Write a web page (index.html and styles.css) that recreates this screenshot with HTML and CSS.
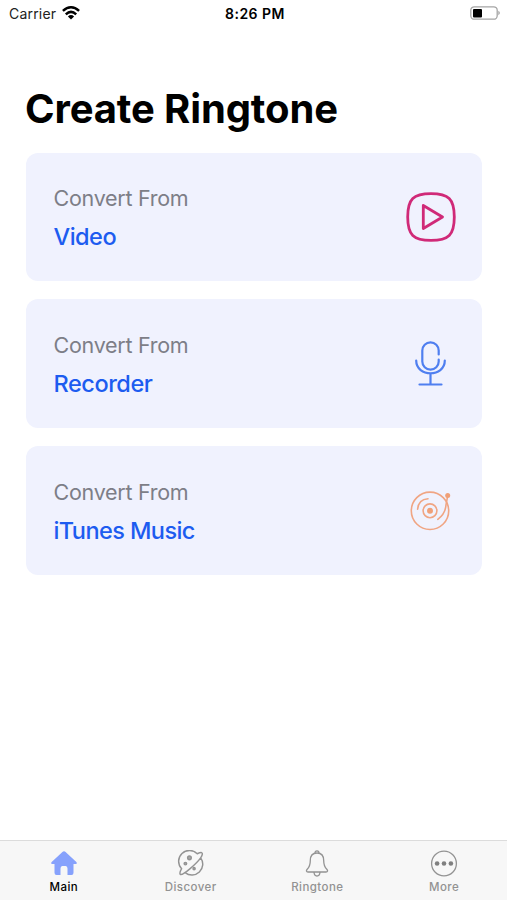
FILE: index.html
```html
<!DOCTYPE html>
<html lang="en">
<head>
<meta charset="utf-8">
<title>Create Ringtone</title>
<link rel="stylesheet" href="styles.css">
</head>
<body>
<div class="app">
  <header class="status">
    <div class="carrier"><span class="carrier-name">Carrier</span>
      <svg class="wifi" width="18" height="14" viewBox="0 0 18 14" fill="none" stroke="#000" stroke-width="2.5"><path d="M.9 4.9Q9-2.3 17.1 4.9M3.8 8.300Q9 3.500 14.2 8.300"/><path d="M9 13.6 5.9 10.4Q9 7.8 12.1 10.4Z" fill="#000" stroke="none"/></svg>
    </div>
    <span class="clock">8:26 PM</span>
    <svg class="battery" width="31" height="14" viewBox="0 0 31 14"><rect x=".8" y=".8" width="26.4" height="12.4" rx="3.5" fill="none" stroke="#a5a5a5" stroke-width="1.3"/><rect x="3" y="3" width="9" height="8.500" rx="1" fill="#000"/><path d="M28.3 4.800Q31.500 7 28.3 9.200Z" fill="#a5a5a5"/></svg>
  </header>
  <main class="content">
    <h1 class="title">Create Ringtone</h1>
    <section class="cards">
      <article class="card">
        <div class="text"><p class="from">Convert From</p><p class="source source-video">Video</p></div>
        <svg class="icon" width="52" height="52" viewBox="0 0 52 52" fill="none" stroke="#d02a78" stroke-width="2.8" stroke-linejoin="round"><path d="M26 2.7C43.5 2.7 49.3 8 49.3 26S43.5 49.3 26 49.3 2.7 44 2.7 26 8.500 2.700 26 2.700Z"/><path d="M18.300 14.500 37.500 26 18.300 37.500Z"/></svg>
      </article>
      <article class="card">
        <div class="text"><p class="from">Convert From</p><p class="source source-recorder">Recorder</p></div>
        <svg class="icon" width="52" height="52" viewBox="0 0 52 52" fill="none" stroke="#4f7ff0" stroke-width="2.200" stroke-linecap="round"><path d="M33.700 16.500V12.500A8.200 8.200 0 0 0 17.300 12.500V23.500A8.200 8.200 0 0 0 33.700 23.500V21.500M11.200 22.500C11.200 39.500 39.800 39.500 39.800 22.500M25.500 35.500V46.500M14.500 46.500H36.500"/></svg>
      </article>
      <article class="card">
        <div class="text"><p class="from">Convert From</p><p class="source source-itunes">iTunes Music</p></div>
        <svg class="icon" width="52" height="52" viewBox="0 -.8 52 52" fill="none" stroke="#f0a583" stroke-width="1.600" stroke-linecap="round"><circle cx="25" cy="26" r="18.700"/><circle cx="25" cy="26" r="6.900"/><circle cx="25" cy="26" r="3" fill="#f0a078" stroke="none"/><path d="M12.600 24.500Q13.500 14.500 23 14"/><path d="M42.500 12 41 20Q40.500 29 32.800 34.500"/><circle cx="42.700" cy="10.600" r="2.500" fill="#f0a078" stroke="none"/></svg>
      </article>
    </section>
  </main>
  <nav class="tabs">
    <a class="tab tab-active">
      <svg width="28" height="28" viewBox="0 0 28 28"><path d="M14 1.200Q14.800 1.200 15.600 1.900L26.600 12.200Q27.400 13.600 26 14H23.500V22.800Q23.500 25 21.500 25H17.500V18.500Q17.500 16 15.700 16H12.300Q10.500 16 10.500 18.500V25H6.500Q4.500 25 4.500 22.800V14H2Q.600 13.600 1.400 12.200L12.400 1.900Q13.200 1.200 14 1.200Z" fill="#86a1fc"/></svg>
      <span class="label">Main</span>
    </a>
    <a class="tab">
      <svg width="28" height="28" viewBox="-1.200 -.600 29 29" fill="none" stroke="#939393" stroke-width="1.500" stroke-linecap="round" stroke-linejoin="round"><path d="M19.800 3.300A11.200 11.200 0 0 0 3.600 18.800C2 21.500 1.200 24 2.500 24.800 5.500 25.500 19 13.500 23.300 7.500 25.200 4.500 25.600 2.500 24.200 2.100 23 2 21.500 2.500 19.800 3.300M23.300 7.500A11.200 11.200 0 0 1 7.200 22.800"/><circle cx="11.700" cy="7.500" r="1.900" fill="#a8a8a8"/><circle cx="7.500" cy="13.500" r="1.300" fill="#a8a8a8"/><circle cx="16.500" cy="18.700" r="1.100" fill="#a8a8a8"/></svg>
      <span class="label">Discover</span>
    </a>
    <a class="tab">
      <svg width="28" height="28" viewBox="0 0 28 28" fill="none" stroke="#939393" stroke-width="1.300" stroke-linejoin="round"><path d="M14 3C9 3 7.300 6.500 7.300 10.500 7.300 15.500 6.600 17 4.200 19.200 2.900 20.500 3.300 22 5 22H23C24.700 22 25.100 20.500 23.800 19.200 21.400 17 20.700 15.500 20.700 10.500 20.700 6.500 19 3 14 3Z"/><path d="M12 3.300Q12 .900 14 .900T16 3.300M11 22Q11.200 26 14 26T17 22"/></svg>
      <span class="label">Ringtone</span>
    </a>
    <a class="tab">
      <svg width="28" height="28" viewBox="0 0 28 28"><circle cx="14" cy="13.500" r="12.400" fill="none" stroke="#939393" stroke-width="1.300"/><g fill="#7f7f7f"><circle cx="7.100" cy="13.500" r="2.300"/><circle cx="14" cy="13.500" r="2.300"/><circle cx="20.900" cy="13.500" r="2.300"/></g></svg>
      <span class="label">More</span>
    </a>
  </nav>
</div>
</body>
</html>
```
FILE: styles.css
```css
* { box-sizing: border-box; }
body { margin: 0; background: #fff; color: #000; font-family: Inter, "Liberation Sans", sans-serif; }
p, h1 { margin: 0; }
svg { display: block; flex: none; }
.app { height: 900px; display: flex; flex-direction: column; }
.status { height: 27px; padding: 0 6px 0 9px; display: grid; grid-template-columns: 1fr auto 1fr; align-items: center; }
.carrier { display: flex; align-items: center; gap: 6px; }
.carrier-name { font-size: 14px; letter-spacing: .2px; color: #222; }
.wifi { margin-top: -1px; }
.clock { font-size: 14px; font-weight: 600; letter-spacing: .5px; }
.battery { justify-self: end; margin-top: -1px; }
.content { flex: 1; padding: 57px 25px 0; }
.title { font-size: 40px; line-height: 50px; font-weight: 700; letter-spacing: -.12px; white-space: nowrap; }
.cards { margin-top: 18.700px; display: grid; gap: 18px; }
.card { height: 128.700px; margin-left: .5px; padding: 0 25px 0 28px; border-radius: 12px; background: #f0f2fe; display: flex; align-items: center; justify-content: space-between; }
.text { padding-top: 5.500px; }
.from { font-size: 21.500px; line-height: 34px; letter-spacing: -.28px; color: #7d7e87; }
.source { font-size: 23.500px; line-height: 43px; font-weight: 500; color: #1d5cf0; }
.source-video { letter-spacing: -.5px; }
.source-recorder { letter-spacing: -.45px; }
.source-itunes { letter-spacing: -.58px; }
.tabs { height: 60px; border-top: 1px solid #dcdcdc; background: #f7f7f7; display: grid; grid-template-columns: repeat(4, 1fr); }
.tab { padding: 9px 0 0 1px; display: flex; flex-direction: column; align-items: center; color: #929292; }
.label { font-size: 11.500px; line-height: 18px; font-weight: 500; letter-spacing: .45px; }
.tab-active { color: #000; }
```
